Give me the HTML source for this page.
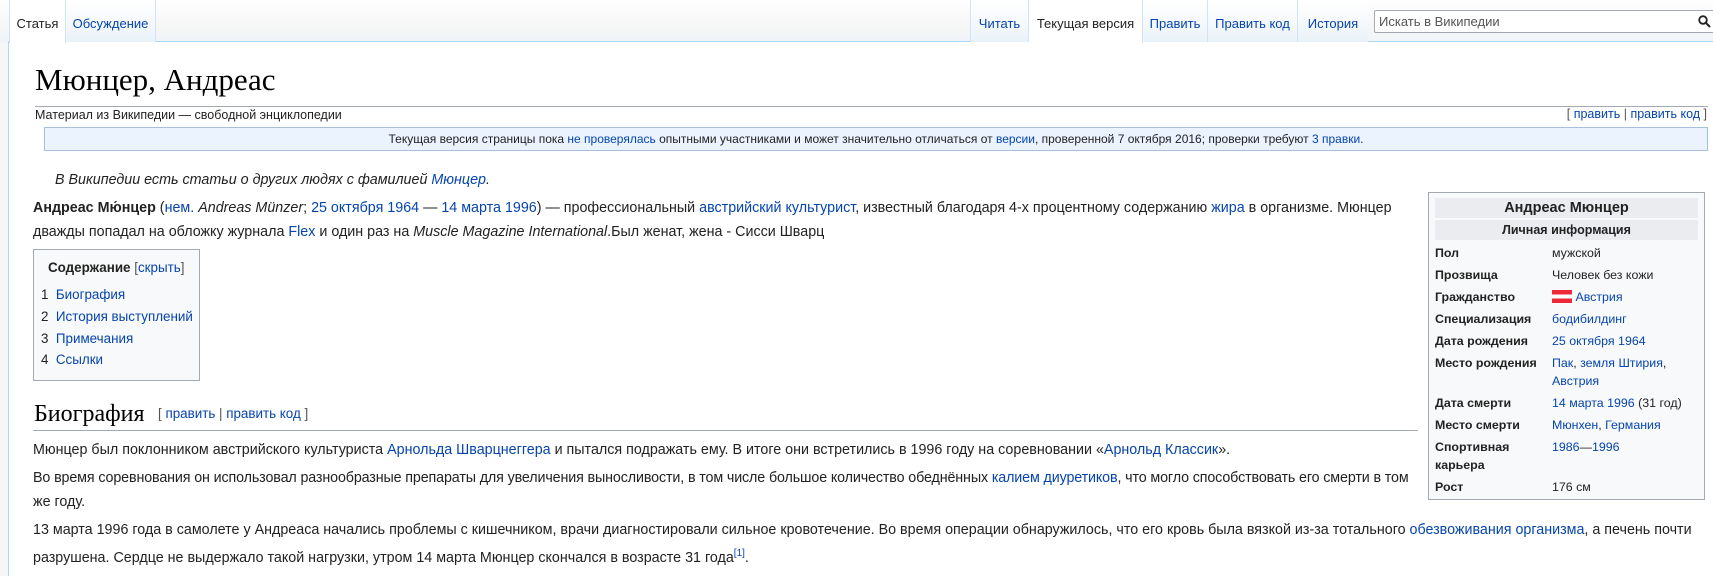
<!DOCTYPE html>
<html><head><meta charset="utf-8"><style>
*{margin:0;padding:0;box-sizing:border-box}
body{width:1713px;height:576px;overflow:hidden;background:#f6f6f6;font-family:"Liberation Sans",Arial,sans-serif;color:#222;position:relative}
a{color:#0645ad;text-decoration:none}
.abs{position:absolute;white-space:nowrap}
#head{position:absolute;left:0;top:0;width:1713px;height:42px;background:linear-gradient(#fff,#f6f6f6 60%,#f0f4f8)}
#content{position:absolute;left:8px;top:41px;width:1705px;height:535px;background:#fff;border-left:1px solid #a7d7f9;border-top:1px solid #a7d7f9}
.tab{position:absolute;top:0;height:42px;padding-top:16px;font-size:13px;text-align:center;background:linear-gradient(#fff 0%,#f4f8fc 60%,#e8f2f8);border-right:1px solid #d0e4f2}
.tab.sel{background:#fff;height:43px;color:#222}
.p{font-size:14.3px;line-height:24px}
.ib td{font-size:12.4px;padding:0;height:22px;vertical-align:top;line-height:18px;padding-top:2px}
</style></head><body>
<div id="head"></div>
<div id="content"></div>
<div class="tab sel" style="left:9px;width:57px;border-left:1px solid #d0e4f2">Статья</div>
<div class="tab" style="left:66px;width:90px"><a>Обсуждение</a></div>
<div class="tab" style="left:970px;width:59px;border-left:1px solid #d0e4f2"><a>Читать</a></div>
<div class="tab sel" style="left:1029px;width:114px">Текущая версия</div>
<div class="tab" style="left:1143px;width:65px"><a>Править</a></div>
<div class="tab" style="left:1208px;width:90px"><a>Править код</a></div>
<div class="tab" style="left:1298px;width:70px;border-right:none"><a>История</a></div>
<div style="position:absolute;left:1374px;top:10px;width:345px;height:23px;border:1px solid #a2a9b1;background:#fff;border-radius:2px;font-size:13px;color:#555;padding:3px 4px">Искать в Википедии</div>
<svg style="position:absolute;left:1698px;top:15px" width="13" height="13" viewBox="0 0 13 13"><circle cx="5" cy="5" r="3.8" fill="none" stroke="#222" stroke-width="1.8"/><path d="M8 8l4 4" stroke="#222" stroke-width="2"/></svg>

<div class="abs" style="left:35px;top:62px;font-family:'Liberation Serif',Georgia,serif;font-size:31px;color:#000">Мюнцер, Андреас</div>
<div style="position:absolute;left:35px;top:106px;width:1673px;height:1px;background:#a2a9b1"></div>
<div class="abs" style="left:35px;top:108px;font-size:12.5px">Материал из Википедии — свободной энциклопедии</div>
<div class="abs" style="right:6px;top:107px;font-size:12.5px;color:#555">[ <a>править</a> | <a>править код</a> ]</div>
<div style="position:absolute;left:44px;top:127px;width:1664px;height:24px;background:#eaf3ff;border:1px solid #a7c0dd;font-size:12px;text-align:center;line-height:22px;white-space:nowrap">Текущая версия страницы пока <a>не проверялась</a> опытными участниками и может значительно отличаться от <a>версии</a>, проверенной 7 октября 2016; проверки требуют <a>3 правки</a>.</div>
<div class="abs p" style="left:55px;top:168px;font-style:italic">В Википедии есть статьи о других людях с фамилией <a>Мюнцер</a>.</div>
<div class="abs p" style="left:33px;top:196px"><b>Андреас Мю́нцер</b> (<a>нем.</a> <i>Andreas Münzer</i>; <a>25 октября 1964</a> — <a>14 марта 1996</a>) — профессиональный <a>австрийский</a> <a>культурист</a>, известный благодаря 4-х процентному содержанию <a>жира</a> в организме. Мюнцер</div>
<div class="abs p" style="left:33px;top:220px">дважды попадал на обложку журнала <a>Flex</a> и один раз на <i>Muscle Magazine International</i>.Был женат, жена - Сисси Шварц</div>

<div style="position:absolute;left:33px;top:249px;width:167px;height:132px;background:#f8f9fa;border:1px solid #a2a9b1;font-size:13.4px">
<div class="abs" style="left:14px;top:10px"><b>Содержание</b> <span style="color:#555">[<a>скрыть</a>]</span></div>
<div class="abs" style="left:7px;top:34px;line-height:21.8px">1&nbsp; <a>Биография</a><br>2&nbsp; <a>История выступлений</a><br>3&nbsp; <a>Примечания</a><br>4&nbsp; <a>Ссылки</a></div>
</div>

<div class="abs" style="left:34px;top:401px;font-family:'Liberation Serif',Georgia,serif;font-size:24px;color:#000">Биография <span style="font-family:'Liberation Sans',sans-serif;font-size:13.4px;color:#555;vertical-align:3px">&nbsp;&nbsp;[ <a>править</a> | <a>править код</a> ]</span></div>
<div style="position:absolute;left:33px;top:430px;width:1385px;height:1px;background:#a2a9b1"></div>
<div class="abs p" style="left:33px;top:438px">Мюнцер был поклонником австрийского культуриста <a>Арнольда Шварцнеггера</a> и пытался подражать ему. В итоге они встретились в 1996 году на соревновании «<a>Арнольд Классик</a>».</div>
<div class="abs p" style="left:33px;top:466px;letter-spacing:-0.13px">Во время соревнования он использовал разнообразные препараты для увеличения выносливости, в том числе большое количество обеднённых <a>калием</a> <a>диуретиков</a>, что могло способствовать его смерти в том</div>
<div class="abs p" style="left:33px;top:490px">же году.</div>
<div class="abs p" style="left:33px;top:518px">13 марта 1996 года в самолете у Андреаса начались проблемы с кишечником, врачи диагностировали сильное кровотечение. Во время операции обнаружилось, что его кровь была вязкой из-за тотального <a>обезвоживания организма</a>, а печень почти</div>
<div class="abs p" style="left:33px;top:542px">разрушена. Сердце не выдержало такой нагрузки, утром 14 марта Мюнцер скончался в возрасте 31 года<sup style="font-size:10px"><a>[1]</a></sup>.</div>

<div style="position:absolute;left:1428px;top:192px;width:277px;height:308px;background:#f8f9fa;border:1px solid #a2a9b1;padding:5px 6px">
<div style="background:#eaecf0;height:20px;text-align:center;font-weight:bold;font-size:14.5px;line-height:20px">Андреас Мюнцер</div>
<div style="background:#eaecf0;height:20px;margin-top:2px;text-align:center;font-weight:bold;font-size:12.5px;line-height:20px">Личная информация</div>
<table class="ib" style="border-collapse:collapse;margin-top:2px;width:100%">
<tr><td style="width:117px;font-weight:bold">Пол</td><td>мужской</td></tr>
<tr><td style="font-weight:bold">Прозвища</td><td>Человек без кожи</td></tr>
<tr><td style="font-weight:bold">Гражданство</td><td><span style="display:inline-block;width:20px;height:13px;vertical-align:-2px;background:linear-gradient(#ed2939 33%,#fff 33%,#fff 67%,#ed2939 67%)"></span> <a>Австрия</a></td></tr>
<tr><td style="font-weight:bold">Специализация</td><td><a>бодибилдинг</a></td></tr>
<tr><td style="font-weight:bold">Дата рождения</td><td><a>25 октября 1964</a></td></tr>
<tr><td style="font-weight:bold;height:40px">Место рождения</td><td><a>Пак</a>, <a>земля Штирия</a>,<br><a>Австрия</a></td></tr>
<tr><td style="font-weight:bold">Дата смерти</td><td><a>14 марта 1996</a> (31 год)</td></tr>
<tr><td style="font-weight:bold">Место смерти</td><td><a>Мюнхен</a>, <a>Германия</a></td></tr>
<tr><td style="font-weight:bold;height:40px">Спортивная<br>карьера</td><td><a>1986</a>—<a>1996</a></td></tr>
<tr><td style="font-weight:bold">Рост</td><td>176 см</td></tr>
</table>
</div>
</body></html>
